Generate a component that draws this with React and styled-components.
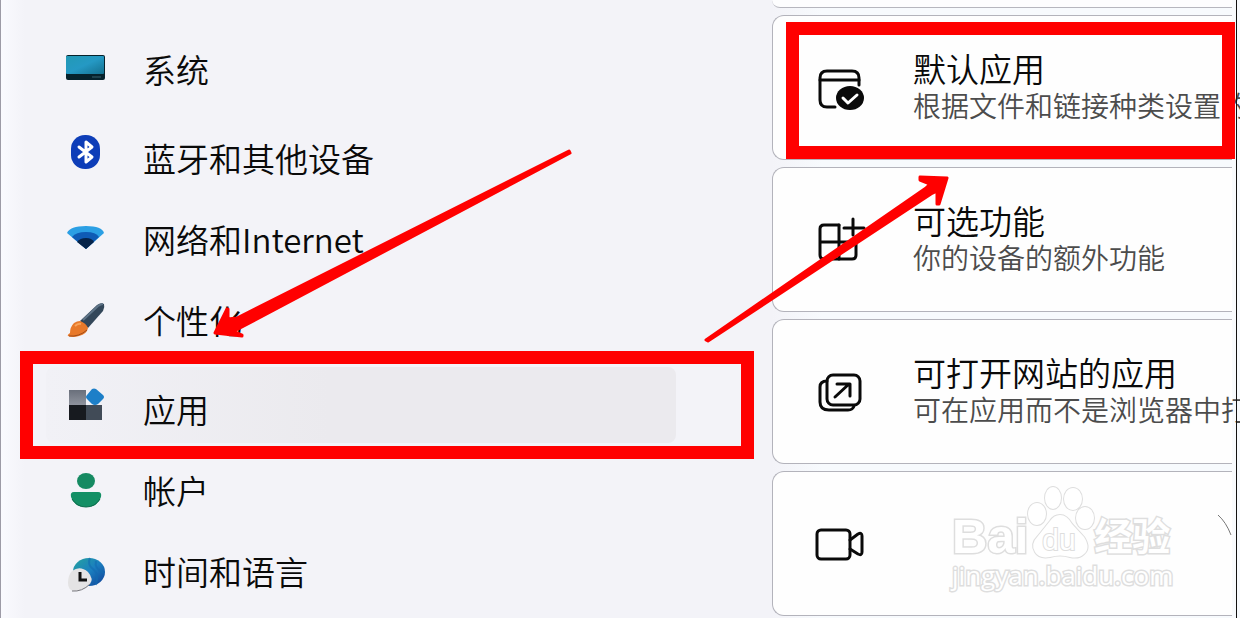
import React from 'react';
import styled, { createGlobalStyle } from 'styled-components';

const GlobalStyle = createGlobalStyle`
	* {
		box-sizing: border-box;
	}
	body {
		margin: 0;
		background: #f3f3f8;
		color: #0a0a0a;
		font-family: 'Noto Sans CJK SC', sans-serif;
		font-weight: 350;
	}
`;

const Page = styled.main`
	position: relative;
	display: grid;
	grid-template-columns: minmax(0, 1fr) 468px;
	min-height: 100vh;
	overflow: hidden;
	border-left: 1px solid #9d9ba6;
	background: linear-gradient(90deg, #fafafe 0, #f3f3f8 24px);
`;

const Nav = styled.nav`
	display: flex;
	flex-direction: column;
	gap: 8px;
	padding: 30px 18px 0 19px;
`;

const NavGroup = styled.ul`
	list-style: none;
	margin: 0;
	padding: 0;
`;

const NavItem = styled.li`
	position: relative;
	isolation: isolate;
	&::before {
		content: '';
		display: ${(props) => (props.$active ? 'block' : 'none')};
		position: absolute;
		z-index: -1;
		inset: -3px 78px 8px 26px;
		border-radius: 8px;
		background: linear-gradient(90deg, #f1f1f6, #ebeaee 45%);
	}
`;

const NavLink = styled.a`
	display: flex;
	align-items: center;
	gap: 33px;
	height: 81px;
	padding: 0 0 4px 42px;
	color: inherit;
	font-size: 33px;
	line-height: 48px;
	text-decoration: none;
	white-space: nowrap;
`;

const NavIcon = styled.svg`
	flex: none;
	width: 48px;
	height: 56px;
`;

const Cards = styled.section`
	display: flex;
	flex-direction: column;
	gap: 7px;
	padding-right: 8px;
	background: linear-gradient(90deg, #f3f3f8, #f7fafd 50px);
`;

const CardEnd = styled.div`
	height: 8px;
	border-bottom: 1px solid #b6b6be;
	border-radius: 0 0 0 12px;
	background: #fdfdfe;
`;

const CardItem = styled.div`
	position: relative;
	height: 145px;
`;

const Card = styled.a`
	display: flex;
	align-items: center;
	gap: 46px;
	height: 100%;
	padding: 0 0 2px 42px;
	border: 1px solid #b3b3bb;
	border-right: none;
	border-radius: 12px 0 0 12px;
	background: #fefefe;
	color: inherit;
	text-decoration: none;
	white-space: nowrap;
`;

const CardIcon = styled.svg`
	flex: none;
	width: 52px;
	height: 52px;
	fill: none;
	stroke: #0a0a0a;
	stroke-width: 3;
	stroke-linecap: round;
	stroke-linejoin: round;
`;

const CardText = styled.div`
	display: flex;
	flex-direction: column;
`;

const CardTitle = styled.span`
	font-size: 33px;
	line-height: 38px;
`;

const CardNote = styled.span`
	color: #4c4c4c;
	font-size: 28px;
	line-height: 37px;
`;

const Marker = styled.div`
	position: absolute;
	inset: ${(props) => props.$inset};
	border: 13px solid #ff0000;
	pointer-events: none;
`;

const WindowEdge = styled.div`
	position: absolute;
	top: 0;
	right: 3px;
	bottom: 0;
	width: 1px;
	background: #111;
`;

const Arrows = styled.svg`
	position: absolute;
	top: 0;
	right: 0;
	width: 1240px;
	height: 618px;
	pointer-events: none;
`;

const Watermark = styled.div`
	position: absolute;
	top: 12px;
	left: 180px;
	color: #fff;
	-webkit-text-stroke: 3px #dedede;
	paint-order: stroke fill;
`;

const WatermarkLogo = styled.div`
	display: flex;
	align-items: flex-end;
	height: 76px;
`;

const WatermarkLatin = styled.span`
	font: bold 49px/46px 'Liberation Sans', sans-serif;
`;

const WatermarkHan = styled.span`
	font-size: 38px;
	font-weight: 700;
	line-height: 50px;
`;

const WatermarkUrl = styled.div`
	font: 400 26px/32px 'Open Sans', sans-serif;
`;

const Paw = styled.svg`
	width: 66px;
	height: 76px;
	overflow: visible;
	fill: #fff;
	stroke: #dedede;
	stroke-width: 2;
`;

const SystemIcon = () => (
	<NavIcon viewBox='0 0 48 56' aria-hidden='true'>
		<defs>
			<linearGradient id='screen' x1='0' y1='0' x2='1' y2='1'>
				<stop offset='0' stopColor='#2299b5' />
				<stop offset='0.5' stopColor='#2599c4' />
				<stop offset='1' stopColor='#14708f' />
			</linearGradient>
		</defs>
		<rect x='4' y='14' width='39' height='25' rx='2' fill='#06222c' />
		<rect x='4' y='15' width='38' height='18' rx='1' fill='url(#screen)' />
		<path d='M30 36h9' stroke='#37606c' />
	</NavIcon>
);

const BluetoothIcon = () => (
	<NavIcon viewBox='0 0 48 56' aria-hidden='true'>
		<rect x='9' y='5' width='29' height='34' rx='14' fill='#0d3db8' />
		<path
			d='M17 17l13 10-6 5V12l6 5-13 10'
			fill='none'
			stroke='#fff'
			strokeWidth='3'
			strokeLinejoin='round'
			strokeLinecap='round'
		/>
	</NavIcon>
);

const NetworkIcon = () => (
	<NavIcon viewBox='0 0 48 56' aria-hidden='true'>
		<path d='M5 22Q8 15 24 15T42 22L24 38Z' fill='#2b9fe4' />
		<path d='M10 26Q14 21 24 21T37 26L24 38Z' fill='#0f5bb5' />
		<path d='M15 31Q18 27 24 27T32 31L24 38Z' fill='#062349' />
	</NavIcon>
);

const BrushIcon = () => (
	<NavIcon viewBox='0 0 48 56' aria-hidden='true'>
		<path d='M18 29L35 13Q39 10 42 12Q43 15 41 19L26 36Z' fill='#33475a' />
		<path
			d='M21 28L36 14Q39 12 41 12'
			fill='none'
			stroke='#5f7488'
			strokeWidth='2'
		/>
		<path
			d='M18 29Q24 31 26 36Q25 42 17 44Q11 46 6 44Q5 43 8 41Q8 35 12 31Q15 29 18 29Z'
			fill='#e8792a'
		/>
		<path d='M7 44Q17 45 25 38' fill='none' stroke='#a04c18' />
		<path
			d='M13 34Q16 31 19 32'
			fill='none'
			stroke='#f8a45a'
			strokeWidth='2'
		/>
	</NavIcon>
);

const AppsIcon = () => (
	<NavIcon viewBox='0 0 48 56' aria-hidden='true'>
		<defs>
			<linearGradient id='tile' x1='0' y1='0' x2='0' y2='1'>
				<stop offset='0' stopColor='#696f7b' />
				<stop offset='1' stopColor='#8f939d' />
			</linearGradient>
		</defs>
		<path d='M7 9h17v15H7z' fill='url(#tile)' />
		<path d='M7 24h17v15H7z' fill='#171a1f' />
		<path d='M24 24h16v15H24z' fill='#414b57' />
		<path
			d='M30 8Q32 7 34 8L41 14Q43 16 41 18L36 23Q33 25 30 23L25 18Q23 16 25 14Z'
			fill='#1d7fc8'
		/>
	</NavIcon>
);

const AccountIcon = () => (
	<NavIcon viewBox='0 0 48 56' aria-hidden='true'>
		<ellipse cx='24' cy='19' rx='9' ry='8' fill='#158a62' />
		<path
			d='M12 30H36Q40 30 39 35Q36 45 24 45T9 35Q8 30 12 30Z'
			fill='#138f65'
		/>
		<path d='M10 37Q15 45 24 45T38 37' fill='none' stroke='#0c6b4b' />
	</NavIcon>
);

const TimeIcon = () => (
	<NavIcon viewBox='0 0 48 56' aria-hidden='true'>
		<defs>
			<linearGradient id='globe' x1='0' y1='0' x2='1' y2='1'>
				<stop offset='0' stopColor='#25a49e' />
				<stop offset='0.5' stopColor='#1b7fc0' />
				<stop offset='1' stopColor='#0f3f96' />
			</linearGradient>
		</defs>
		<ellipse cx='27' cy='29' rx='16' ry='14' fill='url(#globe)' />
		<path
			d='M28 15Q25 22 31 26T34 42M34 18Q32 26 42 30'
			fill='none'
			stroke='#126bb0'
			strokeWidth='2'
			opacity='0.6'
		/>
		<path
			d='M10 28Q18 22 26 29Q32 36 28 41Q22 48 12 48Q6 47 6 40Q6 32 10 28Z'
			fill='#e4e3e4'
		/>
		<path d='M10 48Q20 49 28 41' fill='none' stroke='#77777d' />
		<path d='M18 29v8h7' fill='none' stroke='#111' strokeWidth='3' />
	</NavIcon>
);

const DefaultAppsIcon = () => (
	<CardIcon viewBox='0 0 52 52' aria-hidden='true'>
		<path d='M20 46H12Q5 46 5 39V17Q5 10 12 10H37Q44 10 44 17V24' />
		<path d='M5 19H44' />
		<ellipse cx='35' cy='37' rx='14' ry='12' fill='#0a0a0a' stroke='none' />
		<path d='M28 37l5 5 9-8' stroke='#fff' />
	</CardIcon>
);

const OptionalIcon = () => (
	<CardIcon viewBox='0 0 52 52' aria-hidden='true'>
		<path d='M24 12H9Q5 12 5 16V42Q5 46 9 46H37Q41 46 41 42V29H5' />
		<path d='M24 12V46M38 6V22M29 15H49' />
	</CardIcon>
);

const WebsiteIcon = () => (
	<CardIcon viewBox='0 0 52 52' aria-hidden='true'>
		<rect x='12' y='10' width='33' height='30' rx='6' />
		<path d='M12 16Q5 16 5 22V37Q5 45 14 45H33Q38 45 39 41' />
		<path d='M20 32L34 19M22 19H35V31' />
	</CardIcon>
);

const VideoIcon = () => (
	<CardIcon viewBox='0 0 52 52' aria-hidden='true'>
		<rect x='2' y='13' width='33' height='29' rx='4' />
		<path d='M35 23L43 17Q47 15 47 19V35Q47 39 43 37L35 32' />
	</CardIcon>
);

const navGroups = [
	[{ label: '系统', icon: SystemIcon }],
	[
		{ label: '蓝牙和其他设备', icon: BluetoothIcon },
		{ label: '网络和Internet', icon: NetworkIcon },
		{ label: '个性化', icon: BrushIcon },
	],
	[
		{ label: '应用', icon: AppsIcon, active: true },
		{ label: '帐户', icon: AccountIcon },
		{ label: '时间和语言', icon: TimeIcon },
	],
];

const cards = [
	{
		title: '默认应用',
		note: '根据文件和链接种类设置的默认值',
		icon: DefaultAppsIcon,
		marked: true,
	},
	{ title: '可选功能', note: '你的设备的额外功能', icon: OptionalIcon },
	{
		title: '可打开网站的应用',
		note: '可在应用而不是浏览器中打开的网站',
		icon: WebsiteIcon,
	},
];

const BaiduWatermark = () => (
	<Watermark>
		<WatermarkLogo>
			<WatermarkLatin>Bai</WatermarkLatin>
			<Paw viewBox='0 0 66 76'>
				<ellipse cx='9' cy='31' rx='9' ry='11' />
				<ellipse cx='25' cy='15' rx='8' ry='11' />
				<ellipse cx='45' cy='16' rx='9' ry='11' />
				<ellipse cx='57' cy='35' rx='9' ry='11' />
				<path d='M32 32Q39 32 44 41L56 54Q63 65 56 71Q51 76 42 74Q32 71 22 74Q11 76 7 69Q2 61 10 53L22 38Q26 32 32 32Z' />
				<text
					x='31'
					y='67'
					textAnchor='middle'
					fontFamily='Liberation Sans'
					fontSize='30'
					fontWeight='400'
				>
					du
				</text>
			</Paw>
			<WatermarkHan>经验</WatermarkHan>
		</WatermarkLogo>
		<WatermarkUrl>jingyan.baidu.com</WatermarkUrl>
	</Watermark>
);

export default function App() {
	return (
		<>
			<GlobalStyle />
			<Page>
				<Nav>
					{navGroups.map((group, i) => (
						<NavGroup key={i}>
							{group.map(({ label, icon: Icon, active }) => (
								<NavItem key={label} $active={active}>
									<NavLink href='#'>
										<Icon />
										{label}
									</NavLink>
									{active && <Marker $inset='-19px 0 -8px 0' />}
								</NavItem>
							))}
						</NavGroup>
					))}
				</Nav>
				<Cards>
					<CardEnd />
					{cards.map(({ title, note, icon: Icon, marked }) => (
						<CardItem key={title}>
							<Card href='#'>
								<Icon />
								<CardText>
									<CardTitle>{title}</CardTitle>
									<CardNote>{note}</CardNote>
								</CardText>
							</Card>
							{marked && <Marker $inset='7px -3px 1px 14px' />}
						</CardItem>
					))}
					<CardItem>
						<Card href='#' aria-label='视频播放'>
							<VideoIcon />
						</Card>
						<BaiduWatermark />
					</CardItem>
				</Cards>
				<WindowEdge />
				<Arrows viewBox='0 0 1240 618' aria-hidden='true'>
					<g fill='#ff0000' stroke='#ff0000' strokeLinejoin='round'>
						<path
							d='M569 151L570 153L240 328L233 331L242 335L242 336L215 333L227 309L228 309L228 319L237 318Z'
							strokeWidth='3'
						/>
						<path
							d='M706 340L708 341L931 194L937 191L937 204L939 204L947 178L920 177L920 180L930 184L926 188Z'
							strokeWidth='3'
						/>
					</g>
					<path
						d='M1218 515Q1226 522 1231 535'
						fill='none'
						stroke='#777'
					/>
				</Arrows>
			</Page>
		</>
	);
}
